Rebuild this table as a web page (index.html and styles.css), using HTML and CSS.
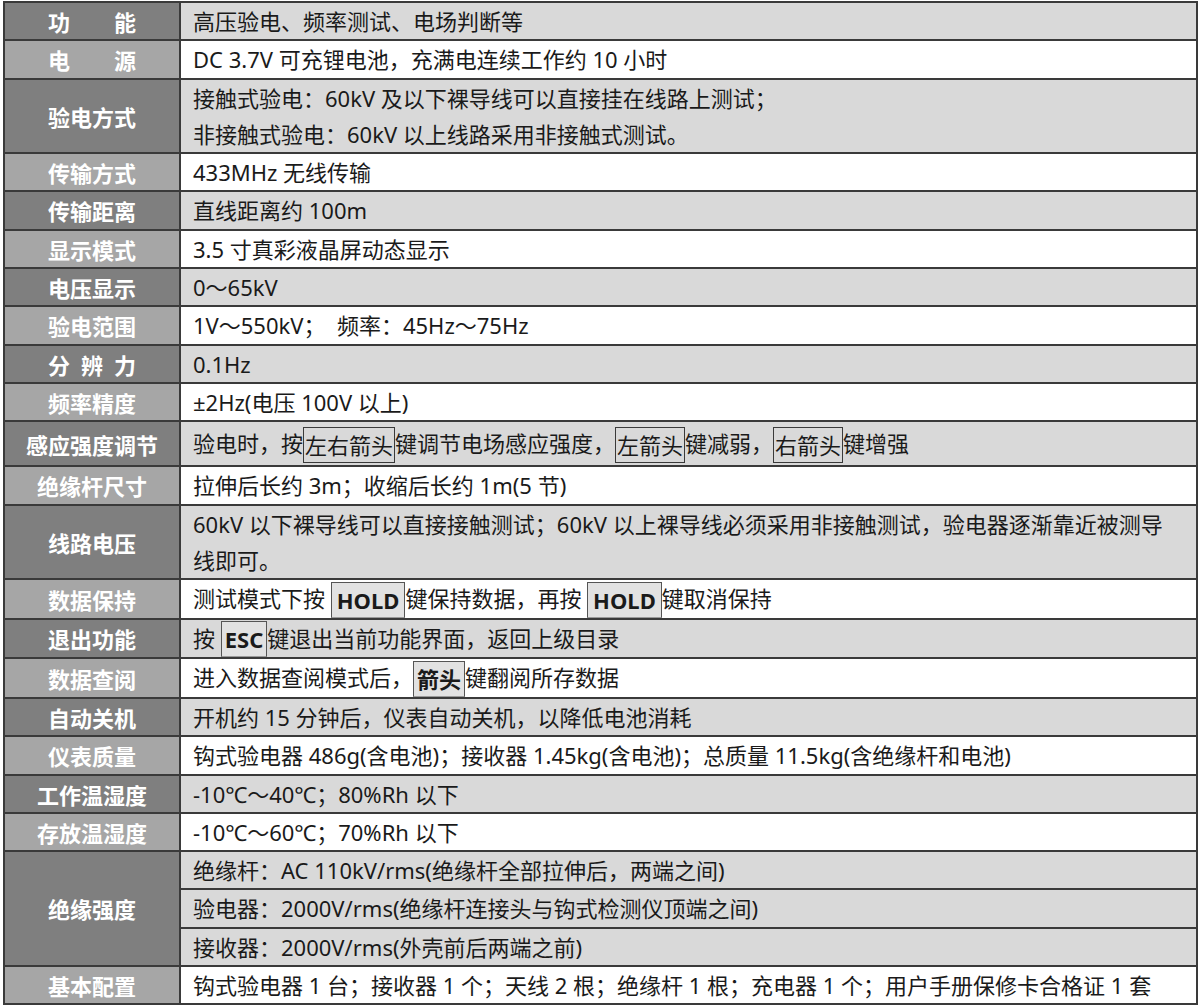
FILE: index.html
```html
<!DOCTYPE html>
<html lang="zh-CN">
<head>
<meta charset="utf-8">
<title>技术参数</title>
<link rel="stylesheet" href="styles.css">
</head>
<body>
<table class="spec">
<colgroup><col class="c-head"><col></colgroup>
<tbody>
<tr class="g"><th class="dk">功　　能</th><td>高压验电、频率测试、电场判断等</td></tr>
<tr><th class="lt">电　　源</th><td>DC 3.7V 可充锂电池，充满电连续工作约 10 小时</td></tr>
<tr class="g"><th class="dk">验电方式</th><td>接触式验电：60kV 及以下裸导线可以直接挂在线路上测试；<br>非接触式验电：60kV 以上线路采用非接触式测试。</td></tr>
<tr><th class="lt">传输方式</th><td>433MHz 无线传输</td></tr>
<tr class="g"><th class="dk">传输距离</th><td>直线距离约 100m</td></tr>
<tr><th class="lt">显示模式</th><td>3.5 寸真彩液晶屏动态显示</td></tr>
<tr class="g"><th class="dk">电压显示</th><td>0～65kV</td></tr>
<tr><th class="lt">验电范围</th><td>1V～550kV；&nbsp; 频率：45Hz～75Hz</td></tr>
<tr class="g"><th class="dk"><span class="sp">分辨力</span></th><td>0.1Hz</td></tr>
<tr><th class="lt">频率精度</th><td>±2Hz(电压 100V 以上)</td></tr>
<tr class="g tall"><th class="dk">感应强度调节</th><td>验电时，按<span class="key">左右箭头</span>键调节电场感应强度，<span class="key">左箭头</span>键减弱，<span class="key">右箭头</span>键增强</td></tr>
<tr><th class="lt">绝缘杆尺寸</th><td>拉伸后长约 3m；收缩后长约 1m(5 节)</td></tr>
<tr class="g"><th class="dk">线路电压</th><td>60kV 以下裸导线可以直接接触测试；60kV 以上裸导线必须采用非接触测试，验电器逐渐靠近被测导<br>线即可。</td></tr>
<tr><th class="lt">数据保持</th><td>测试模式下按 <span class="key fill wide">HOLD</span>键保持数据，再按 <span class="key fill wide">HOLD</span>键取消保持</td></tr>
<tr class="g"><th class="dk">退出功能</th><td>按 <span class="key fill">ESC</span>键退出当前功能界面，返回上级目录</td></tr>
<tr><th class="lt">数据查阅</th><td>进入数据查阅模式后，<span class="key fill">箭头</span>键翻阅所存数据</td></tr>
<tr class="g"><th class="dk">自动关机</th><td>开机约 15 分钟后，仪表自动关机，以降低电池消耗</td></tr>
<tr><th class="lt">仪表质量</th><td>钩式验电器 486g(含电池)；接收器 1.45kg(含电池)；总质量 11.5kg(含绝缘杆和电池)</td></tr>
<tr class="g"><th class="dk">工作温湿度</th><td>-10℃～40℃；80%Rh 以下</td></tr>
<tr><th class="lt">存放温湿度</th><td>-10℃～60℃；70%Rh 以下</td></tr>
<tr class="g"><th class="dk" rowspan="3">绝缘强度</th><td>绝缘杆：AC 110kV/rms(绝缘杆全部拉伸后，两端之间)</td></tr>
<tr class="g"><td>验电器：2000V/rms(绝缘杆连接头与钩式检测仪顶端之间)</td></tr>
<tr class="g"><td>接收器：2000V/rms(外壳前后两端之前)</td></tr>
<tr><th class="lt">基本配置</th><td>钩式验电器 1 台；接收器 1 个；天线 2 根；绝缘杆 1 根；充电器 1 个；用户手册保修卡合格证 1 套</td></tr>
</tbody>
</table>
</body>
</html>
```
FILE: styles.css
```css
html, body {
  margin: 0;
  padding: 0;
  background: #ffffff;
}

body {
  padding: 1px 0 0 3px;
  font-family: "Noto Sans", "Noto Sans CJK SC", sans-serif;
}

.spec {
  width: 1195px;
  border-collapse: collapse;
  table-layout: fixed;
  border: 2px solid #3a3a3a;
}

.c-head {
  width: 176px;
}

.spec th,
.spec td {
  border: 2px solid #3a3a3a;
  line-height: 36.3px;
  padding: 0;
}

.spec th {
  font-family: "Noto Sans CJK SC", sans-serif;
  font-weight: 700;
  font-size: 22px;
  color: #ffffff;
  text-align: center;
  vertical-align: middle;
  white-space: nowrap;
}

.spec th.dk {
  background: #7f7f7f;
}

.spec th.lt {
  background: #a6a6a6;
}

.spec td {
  font-family: "Noto Sans", "Noto Sans CJK SC", sans-serif;
  font-size: 22px;
  color: #1a1a1a;
  padding: 0 4px 0 12px;
  background: #ffffff;
  text-align: left;
  white-space: nowrap;
}

.spec tr.g td {
  background: #d9d9d9;
}

.spec tr.tall td,
.spec tr.tall th {
  height: 43px;
}

.sp {
  letter-spacing: 11px;
  padding-left: 11px;
}

.key {
  display: inline-block;
  border: 1px solid #3a3a3a;
  line-height: 34px;
  padding: 0 1px;
  vertical-align: middle;
  margin-top: -3px;
}

.key.fill {
  background: #e2e2e2;
  font-weight: 700;
  padding: 0 3px;
  border-color: #555555 #555555 #9a9a9a #555555;
}

.key.fill.wide {
  padding: 0 5px;
}
```
